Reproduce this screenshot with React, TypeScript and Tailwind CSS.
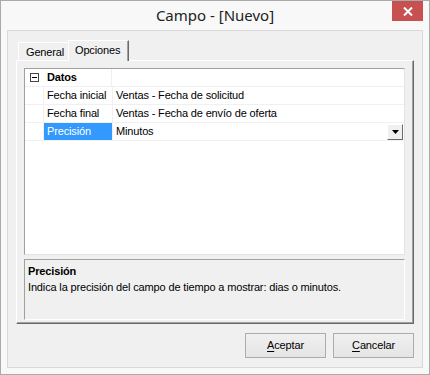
import React from "react";

const rows = [
  { label: "Fecha inicial", value: "Ventas - Fecha de solicitud" },
  { label: "Fecha final", value: "Ventas - Fecha de envío de oferta" },
];

const Underlined = ({ text }: { text: string }) => (
  <span>
    <span className="underline underline-offset-2">{text[0]}</span>
    {text.slice(1)}
  </span>
);

export default function App() {
  return (
    <div className="w-[430px] h-[375px] bg-[#f8f8f8] border border-[#aaaaaa] flex flex-col relative font-['Liberation_Sans',Arial,sans-serif] text-[11px] tracking-[-0.15px] text-black leading-none">
      {/* title bar */}
      <div className="h-[29px] flex items-center justify-center">
        <span className="font-['Noto_Sans',sans-serif] text-[15px] tracking-normal text-[#222] pb-[1px]">Campo - [Nuevo]</span>
      </div>
      <button className="absolute top-0 right-[6px] w-[31px] h-[20px] bg-[#c75050] flex items-center justify-center">
        <svg width="10" height="9" viewBox="0 0 10 9">
          <path d="M1 0.5 L9 8.5 M9 0.5 L1 8.5" stroke="white" strokeWidth="2" />
        </svg>
      </button>

      {/* client area */}
      <div className="ml-[6px] w-[416px] h-[338px] border border-[#d9d9d9] bg-[#f0f0f0] pl-[8px] pt-[9px] flex flex-col">
        {/* tabs */}
        <div className="h-[20px] w-[398px] flex items-end">
          <div className="ml-[2px] w-[50px] h-[18px] border-l border-t border-white flex items-center pl-[7px] pt-[1px]">
            General
          </div>
          <div className="relative z-10 -mb-[1px] w-[61px] h-[21px] border-l border-t border-white border-r border-r-[#696969] bg-[#f0f0f0] flex">
            <div className="flex-1 border-r border-[#a0a0a0] flex items-center pl-[6px] pb-[1px]">Opciones</div>
          </div>
        </div>

        {/* tab page */}
        <div className="w-[398px] h-[264px] border-l border-t border-white border-r border-b border-r-[#696969] border-b-[#696969] flex">
          <div className="flex-1 border-r border-b border-[#a0a0a0] pl-[7px] pt-[7px] flex flex-col">
            {/* property grid */}
            <div className="w-[381px] h-[187px] border-t border-l border-[#a0a0a0] border-r border-b border-r-[#e3e3e3] border-b-[#e3e3e3] bg-white flex flex-col">
              <div className="h-[18px] flex border-b border-[#f0f0f0]">
                <div className="w-[19px] flex items-center justify-center">
                  <div className="w-[9px] h-[9px] border border-[#444] flex items-center justify-center">
                    <div className="w-[5px] h-[1px] bg-black" />
                  </div>
                </div>
                <div className="w-[68px] border-r border-[#f0f0f0] flex items-center pl-[3px] font-bold">Datos</div>
                <div className="flex-1" />
              </div>
              {rows.map((r) => (
                <div key={r.label} className="h-[18px] flex border-b border-[#f0f0f0]">
                  <div className="w-[19px] border-r border-[#f0f0f0]" />
                  <div className="w-[69px] border-r border-[#f0f0f0] flex items-center pl-[3px]">{r.label}</div>
                  <div className="flex-1 flex items-center pl-[3px]">{r.value}</div>
                </div>
              ))}
              <div className="h-[18px] flex border-b border-[#f0f0f0]">
                <div className="w-[19px] border-r border-[#f0f0f0]" />
                <div className="w-[69px] border-r border-[#f0f0f0] flex">
                  <div className="flex-1 bg-[#3399ff] text-white flex items-center pl-[3px]">Precisión</div>
                </div>
                <div className="flex-1 flex items-center pl-[3px] pr-[1px]">
                  <span className="flex-1">Minutos</span>
                  <div className="w-[16px] h-[16px] border-t border-l border-white border-r border-b border-r-[#696969] border-b-[#696969] bg-[#f0f0f0] flex items-center justify-center">
                    <svg width="7" height="4" viewBox="0 0 7 4">
                      <path d="M0 0 H7 L3.5 4 Z" fill="black" />
                    </svg>
                  </div>
                </div>
              </div>
            </div>

            {/* help */}
            <div className="mt-[4px] w-[381px] h-[61px] border-t border-l border-[#a0a0a0] border-r border-b border-r-white border-b-white px-[3px] pt-[6px] flex flex-col gap-[5px]">
              <div className="font-bold">Precisión</div>
              <div>Indica la precisión del campo de tiempo a mostrar: dias o minutos.</div>
            </div>
          </div>
        </div>

        {/* buttons */}
        <div className="w-[398px] mt-[9px] flex justify-end gap-[7px]">
          <button className="w-[81px] h-[25px] border border-[#acacac] bg-gradient-to-b from-[#f0f0f0] to-[#e5e5e5] flex items-center justify-center">
            <Underlined text="Aceptar" />
          </button>
          <button className="w-[81px] h-[25px] border border-[#acacac] bg-gradient-to-b from-[#f0f0f0] to-[#e5e5e5] flex items-center justify-center">
            <Underlined text="Cancelar" />
          </button>
        </div>
      </div>
    </div>
  );
}
